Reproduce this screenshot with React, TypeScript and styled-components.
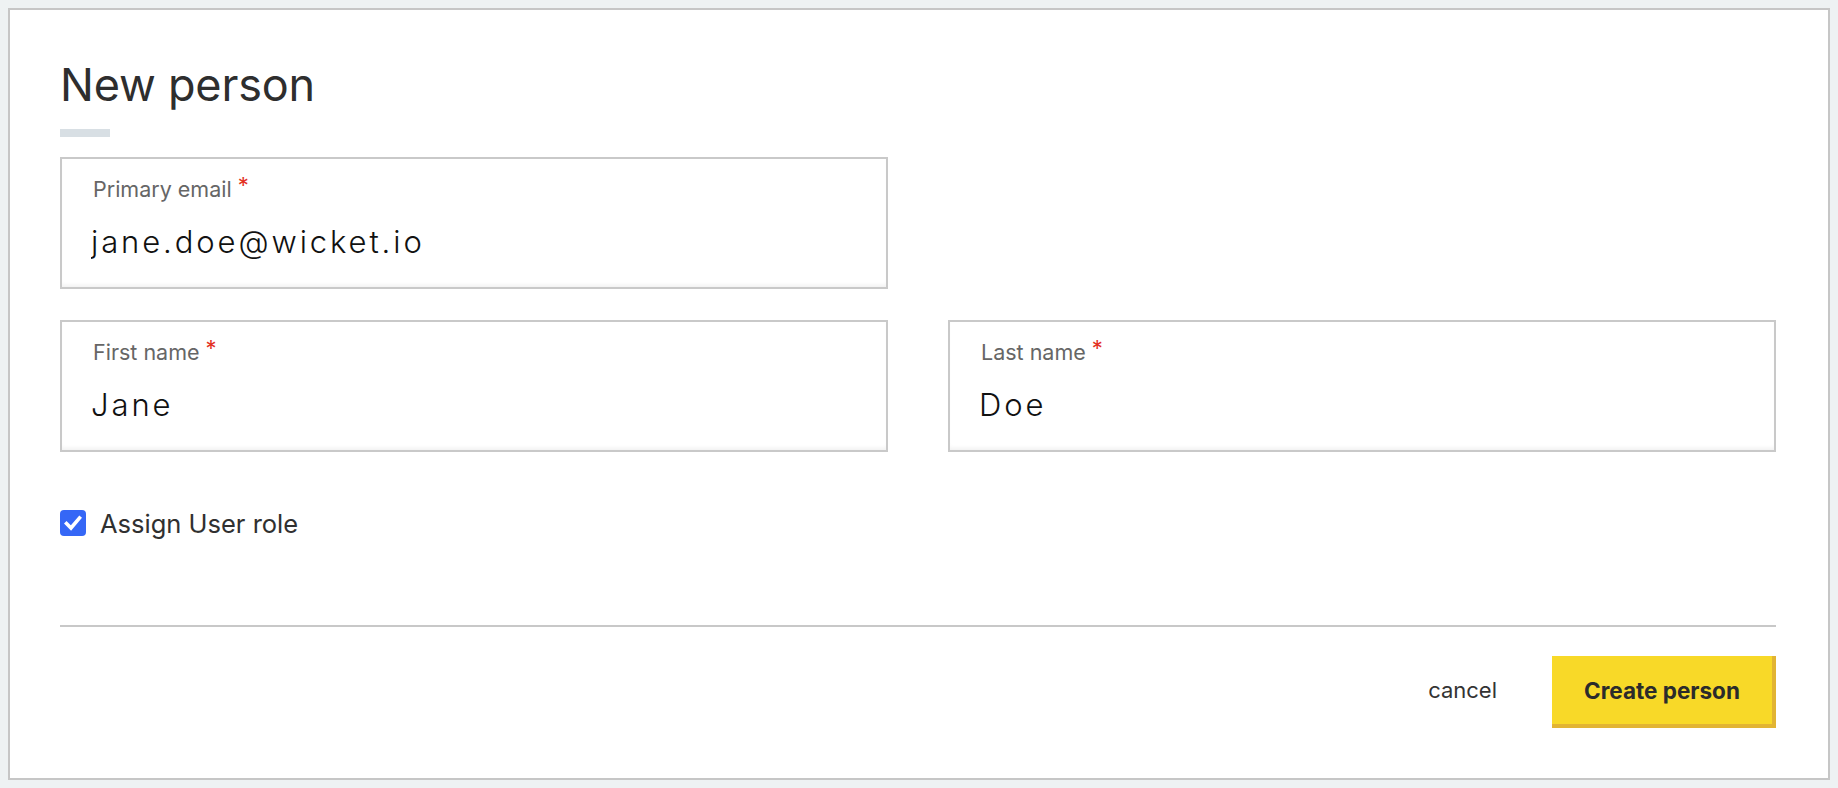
import React, { useState } from "react";
import styled, { createGlobalStyle } from "styled-components";

const GlobalStyle = createGlobalStyle`
  *, *::before, *::after { box-sizing: border-box; }
  html, body { height: 100%; }
  body {
    margin: 8px;
    background: #eef2f3;
    font-family: Inter, "Liberation Sans", Arial, sans-serif;
    color: #2d2d2d;
  }
`;

const Card = styled.div`
  height: calc(100vh - 16px);
  background: #ffffff;
  border: 2px solid #c6c6c6;
  padding: 52px 52px 0 50px;
  display: flex;
  flex-direction: column;
`;

const Title = styled.h1`
  margin: 0;
  font-size: 45px;
  line-height: 45px;
  font-weight: 400;
  color: #2e2e2e;
  letter-spacing: -0.2px;
`;

const TitleBar = styled.div`
  width: 50px;
  height: 8px;
  margin-top: 22px;
  background: #d8dfe4;
`;

const Form = styled.form`
  margin-top: 20px;
  display: flex;
  flex-direction: column;
`;

const FieldRow = styled.div<{ $top?: number }>`
  display: grid;
  grid-template-columns: 1fr 1fr;
  column-gap: 60px;
  margin-top: ${(p) => p.$top ?? 0}px;
`;

const FieldBox = styled.label`
  display: flex;
  flex-direction: column;
  height: 132px;
  border: 2px solid #c9c9c9;
  padding: 13px 30px 0 31px;
  box-shadow: inset 0 -4px 4px -2px rgba(0, 0, 0, 0.06);
  background: #fff;
`;

const FieldLabel = styled.span`
  font-size: 21.5px;
  line-height: 26px;
  color: #666666;
  font-weight: 400;
`;

const Required = styled.span`
  color: #e3301f;
  margin-left: 6px;
  font-size: 22px;
  vertical-align: 4px;
`;

const FieldInput = styled.input`
  margin: 21px 0 0 -2px;
  padding: 0;
  border: none;
  outline: none;
  background: transparent;
  font-family: Inter, "Liberation Sans", Arial, sans-serif;
  font-size: 31px;
  line-height: 37px;
  height: 37px;
  font-weight: 300;
  letter-spacing: 2.9px;
  color: #111111;
  width: 100%;
`;

const CheckRow = styled.label`
  margin-top: 55px;
  display: flex;
  align-items: center;
  gap: 14px;
  cursor: pointer;
`;

const HiddenCheck = styled.input`
  position: absolute;
  opacity: 0;
  width: 0;
  height: 0;
`;

const CheckBox = styled.span<{ $on: boolean }>`
  width: 26px;
  height: 26px;
  border-radius: 4px;
  background: ${(p) => (p.$on ? "#3567f6" : "#fff")};
  border: ${(p) => (p.$on ? "none" : "2px solid #999")};
  display: flex;
  align-items: center;
  justify-content: center;
`;

const CheckText = styled.span`
  font-size: 25.5px;
  line-height: 30px;
  color: #303030;
  padding-top: 2px;
`;

const Divider = styled.hr`
  margin: 86px 0 0 0;
  border: none;
  height: 2px;
  background: #c8c8c8;
`;

const Footer = styled.div`
  margin-top: 29px;
  display: flex;
  justify-content: flex-end;
  align-items: center;
`;

const CancelButton = styled.button`
  border: none;
  background: none;
  padding: 0;
  margin: 0 55px 4px 0;
  font-family: Inter, "Liberation Sans", Arial, sans-serif;
  font-size: 22px;
  color: #333333;
  cursor: pointer;
`;

const PrimaryButton = styled.button`
  width: 224px;
  height: 72px;
  background: #f8d928;
  border: none;
  border-right: 4px solid #e2b433;
  border-bottom: 4px solid #e2b433;
  padding: 0;
  font-family: Inter, "Liberation Sans", Arial, sans-serif;
  font-size: 22.5px;
  font-weight: 700;
  color: #2b2b2b;
  cursor: pointer;
`;

function Field({ label, value, onChange }: { label: string; value: string; onChange: (v: string) => void }) {
  return (
    <FieldBox>
      <FieldLabel>
        {label}
        <Required>*</Required>
      </FieldLabel>
      <FieldInput value={value} onChange={(e) => onChange(e.target.value)} />
    </FieldBox>
  );
}

export default function App() {
  const [email, setEmail] = useState("jane.doe@wicket.io");
  const [first, setFirst] = useState("Jane");
  const [last, setLast] = useState("Doe");
  const [assign, setAssign] = useState(true);

  return (
    <>
      <GlobalStyle />
      <Card>
        <Title>New person</Title>
        <TitleBar />
        <Form onSubmit={(e) => e.preventDefault()}>
          <FieldRow>
            <Field label="Primary email" value={email} onChange={setEmail} />
          </FieldRow>
          <FieldRow $top={31}>
            <Field label="First name" value={first} onChange={setFirst} />
            <Field label="Last name" value={last} onChange={setLast} />
          </FieldRow>
          <CheckRow>
            <HiddenCheck type="checkbox" checked={assign} onChange={(e) => setAssign(e.target.checked)} />
            <CheckBox $on={assign}>
              {assign && (
                <svg width="18" height="16" viewBox="0 0 18 16">
                  <path d="M2.5 8.5 L7 13 L15.5 3" fill="none" stroke="#fff" strokeWidth="3.6" strokeLinecap="square" />
                </svg>
              )}
            </CheckBox>
            <CheckText>Assign User role</CheckText>
          </CheckRow>
          <Divider />
          <Footer>
            <CancelButton type="button">cancel</CancelButton>
            <PrimaryButton type="submit">Create person</PrimaryButton>
          </Footer>
        </Form>
      </Card>
    </>
  );
}
